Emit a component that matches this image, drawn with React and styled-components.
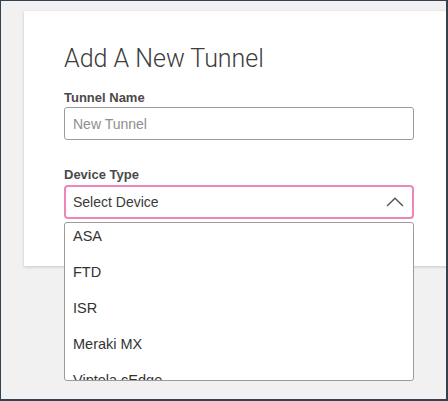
import React from 'react';
import styled, { createGlobalStyle } from 'styled-components';

const GlobalStyle = createGlobalStyle`
  * { box-sizing: border-box; }
  body {
    margin: 0;
    font-family: "Liberation Sans", Arial, sans-serif;
    background: #f1f1f1;
  }
`;

const devices = ['ASA', 'FTD', 'ISR', 'Meraki MX', 'Viptela cEdge'];

export default function App() {
  return (
    <>
      <GlobalStyle />
      <Frame>
        <Card>
          <Title>Add A New Tunnel</Title>
          <Label>Tunnel Name</Label>
          <TextInput placeholder="New Tunnel" />
          <Label $top={27}>Device Type</Label>
          <SelectWrap>
            <SelectBox>
              <span>Select Device</span>
              <svg width="18" height="10" viewBox="0 0 18 10">
                <path d="M1 9 L9 1.2 L17 9" fill="none" stroke="#555" strokeWidth="1.4" />
              </svg>
            </SelectBox>
            <Menu>
              {devices.map((d) => (
                <MenuItem key={d}>{d}</MenuItem>
              ))}
            </Menu>
          </SelectWrap>
        </Card>
      </Frame>
    </>
  );
}

const Frame = styled.div`
  height: 401px;
  overflow: hidden;
  background: #f1f1f1;
  border: 1px solid #33424e;
  border-right-width: 2px;
  border-bottom-width: 2px;
  padding: 10px 0 0 23px;
`;

const Card = styled.div`
  width: 460px;
  height: 255px;
  background: #fff;
  padding: 34px 0 0 40px;
  box-shadow: 0 1px 3px rgba(0, 0, 0, 0.18);
`;

const Title = styled.h1`
  margin: 0;
  font-family: Roboto, "Liberation Sans", sans-serif;
  font-weight: 300;
  font-size: 25px;
  line-height: 28px;
  color: #3d3d3d;
`;

const Label = styled.div`
  margin: ${(p) => p.$top || 17}px 0 2px;
  font-size: 13px;
  line-height: 16px;
  font-weight: 700;
  color: #4a4a4a;
`;

const TextInput = styled.input`
  display: block;
  width: 350px;
  height: 33px;
  margin-top: -1px;
  border: 1px solid #9b9b9b;
  border-radius: 3px;
  padding: 0 8px;
  font-family: "Liberation Sans", Arial, sans-serif;
  font-size: 14px;
  color: #333;
  outline: none;
  &::placeholder { color: #8e8e8e; }
`;

const SelectWrap = styled.div`
  position: relative;
  width: 350px;
`;

const SelectBox = styled.div`
  display: flex;
  align-items: center;
  justify-content: space-between;
  height: 34px;
  border: 2px solid #ee86b8;
  border-radius: 4px;
  padding: 0 8px 0 7px;
  font-size: 14px;
  color: #3a3a3a;
  background: #fff;
`;

const Menu = styled.ul`
  position: absolute;
  top: calc(100% + 3px);
  left: 0;
  width: 350px;
  height: 159px;
  margin: 0;
  padding: 0;
  list-style: none;
  overflow: hidden;
  background: #fff;
  border: 1px solid #9b9b9b;
  border-radius: 3px;
`;

const MenuItem = styled.li`
  padding: 3px 8px 13px;
  height: 36px;
  font-size: 14.5px;
  line-height: 20px;
  color: #333;
`;
